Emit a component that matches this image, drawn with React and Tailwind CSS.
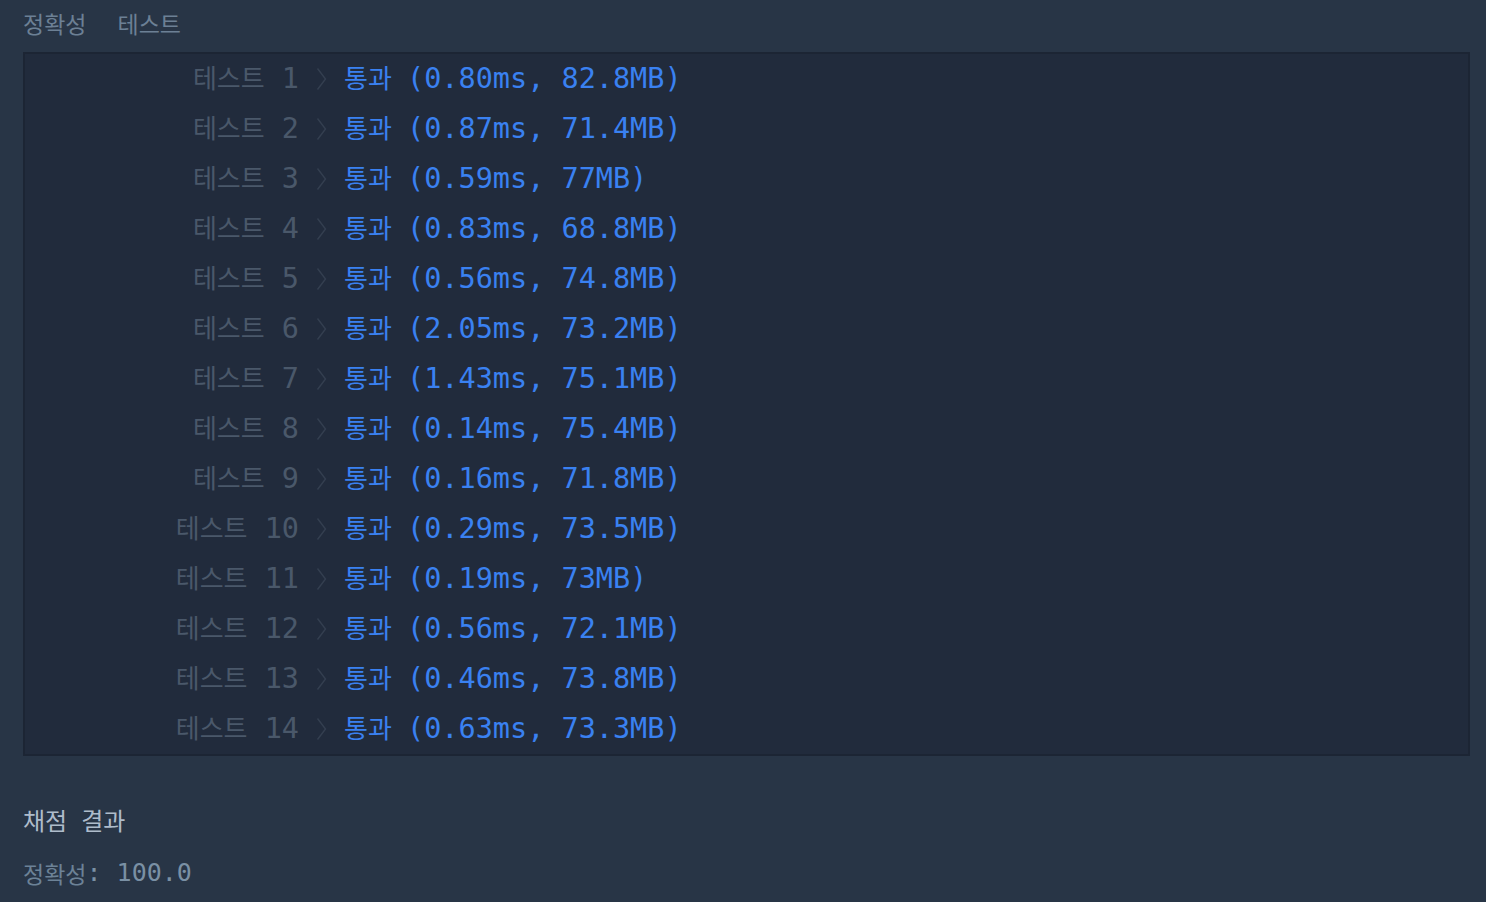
import React from "react";

const results = [
  ["0.80ms", "82.8MB"],
  ["0.87ms", "71.4MB"],
  ["0.59ms", "77MB"],
  ["0.83ms", "68.8MB"],
  ["0.56ms", "74.8MB"],
  ["2.05ms", "73.2MB"],
  ["1.43ms", "75.1MB"],
  ["0.14ms", "75.4MB"],
  ["0.16ms", "71.8MB"],
  ["0.29ms", "73.5MB"],
  ["0.19ms", "73MB"],
  ["0.56ms", "72.1MB"],
  ["0.46ms", "73.8MB"],
  ["0.63ms", "73.3MB"],
];

const mono = "font-['DejaVu_Sans_Mono','Noto_Sans_CJK_KR',monospace]";
const kr = "font-['Noto_Sans_CJK_KR','Noto_Sans',sans-serif]";

function Chevron() {
  return (
    <svg width="11" height="24" viewBox="0 0 11 24" className="shrink-0">
      <path d="M1.5 1.5 L9.5 12 L1.5 22.5" fill="none" stroke="#343f50" strokeWidth="1.4" />
    </svg>
  );
}

function ResultRow({ index, time, mem }) {
  return (
    <div className="flex items-center h-[50px]">
      <div className="w-[274px] text-right whitespace-pre leading-none">
        <span className={`${kr} text-[26px] text-[#4a586a]`}>테스트</span>
        <span className={`${mono} text-[28.5px] text-[#4a586a]`}> {index}</span>
      </div>
      <div className="ml-[17px]">
        <Chevron />
      </div>
      <div className="ml-[17px] whitespace-pre leading-none text-[#3a81f1]">
        <span className={`${kr} text-[26px]`}>통과</span>
        <span className={`${mono} text-[28.5px] -ml-[2px]`}>
          {" "}({time}, {mem})
        </span>
      </div>
    </div>
  );
}

export default function App() {
  return (
    <div className="min-h-screen bg-[#283546] pl-[23px] pr-[16px] pb-10">
      {/* Header */}
      <div className={`h-[47px] mb-[5px] flex items-center ${kr} text-[23px] text-[#6c8095]`}>
        <span>정확성</span>
        <span className="ml-[31px]">테스트</span>
      </div>

      {/* Test results */}
      <div className="border-2 border-[#1c2534] bg-[#212b3c]">
        {results.map(([time, mem], i) => (
          <ResultRow key={i} index={i + 1} time={time} mem={mem} />
        ))}
      </div>

      {/* Score */}
      <div className={`mt-[49px] h-[30px] flex items-center ${kr} text-[24px] text-[#aebccb]`}>
        <span>채점</span>
        <span className="ml-[14px]">결과</span>
      </div>
      <div className="mt-[23px] h-[30px] flex items-center whitespace-pre">
        <span className={`${kr} text-[23px] text-[#6c8297]`}>정확성</span>
        <span className={`${mono} text-[25px] text-[#7a90a4]`}>: 100.0</span>
      </div>
    </div>
  );
}
